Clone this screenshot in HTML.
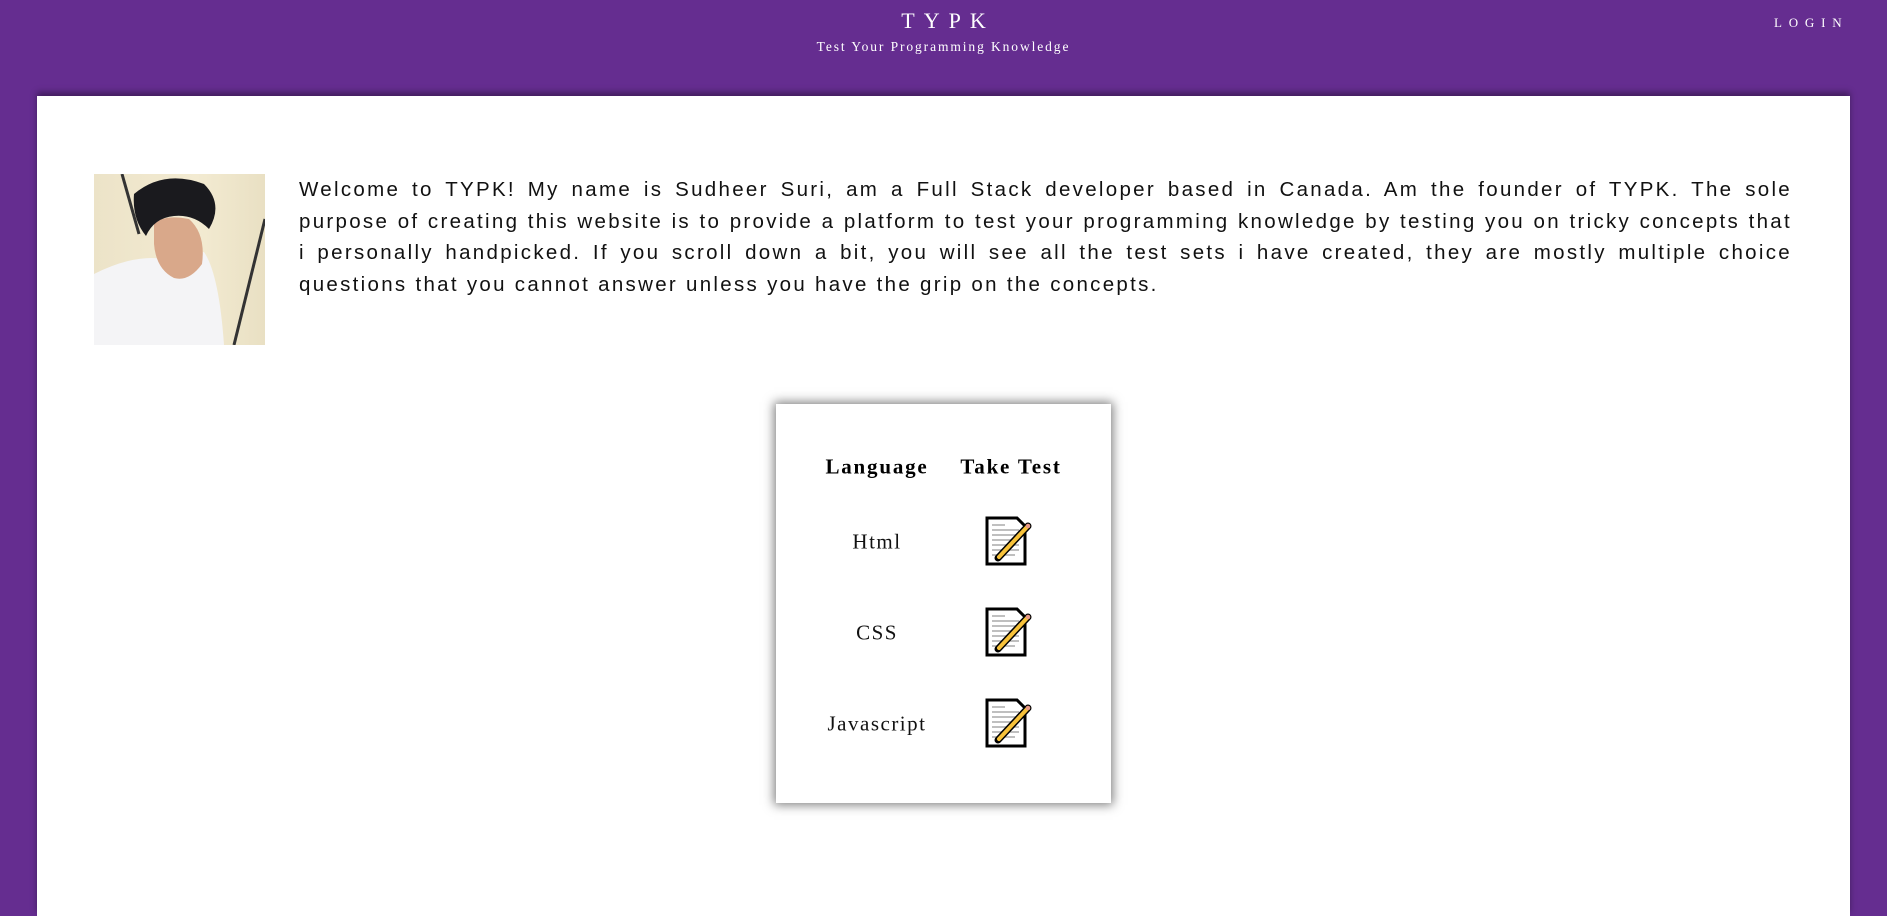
<!DOCTYPE html>
<html><head><meta charset="utf-8"><style>
*{margin:0;padding:0;box-sizing:border-box}
body{width:1887px;height:894px;overflow:hidden;background:#652d90;position:relative;font-family:"Liberation Serif",serif}
.h1{position:absolute;top:8px;left:0;width:1887px;text-align:center;color:#fff;font-size:22px;letter-spacing:9px;padding-left:9px}
.h2{position:absolute;top:39px;left:0;width:1887px;text-align:center;color:#fff;font-size:13.5px;letter-spacing:1.9px}
.login{position:absolute;top:15px;left:1774px;color:#fff;font-size:13px;letter-spacing:6.8px}
.card{position:absolute;left:37px;top:96px;width:1813px;height:820px;background:#fff;box-shadow:0 -4px 6px rgba(0,0,0,.35)}
.photo{position:absolute;left:94px;top:174px;width:171px;height:171px;overflow:hidden;background:linear-gradient(90deg,#ece3c8,#f3ebd2 60%,#e9e0c3)}
.txt{position:absolute;left:299px;top:174px;width:1493px;font-family:"Liberation Sans",sans-serif;font-size:20.5px;letter-spacing:2.3px;line-height:31.7px;text-align:justify;color:#111}
.tbl{position:absolute;left:776px;top:404px;width:335px;height:399px;background:#fff;box-shadow:0 0 10px 2px rgba(0,0,0,.5)}
.c{position:absolute;transform:translate(-50%,-50%);white-space:nowrap;font-size:21px;letter-spacing:1.5px;color:#111}
.b{font-weight:bold;color:#000;letter-spacing:1.8px}
.ic{position:absolute;width:50px;height:50px}
</style></head><body>
<div class="h1">TYPK</div>
<div class="h2">Test Your Programming Knowledge</div>
<div class="login">LOGIN</div>
<div class="card"></div>
<div class="photo"><svg width="171" height="171" viewBox="0 0 171 171">
<line x1="28" y1="0" x2="45" y2="60" stroke="#333" stroke-width="3"/>
<line x1="171" y1="45" x2="140" y2="171" stroke="#333" stroke-width="3"/>
<path d="M0 100 Q40 80 70 85 L110 78 Q125 100 130 171 L0 171Z" fill="#f4f4f6"/>
<path d="M60 50 Q70 40 95 45 Q112 60 108 90 Q95 108 80 104 Q62 95 60 70Z" fill="#d9a88a"/>
<path d="M40 20 Q70 -5 110 10 Q130 30 115 55 Q100 40 80 42 Q60 44 52 62 Q38 45 40 20Z" fill="#1a1a1e"/>
</svg></div>
<div class="txt">Welcome to TYPK! My name is Sudheer Suri, am a Full Stack developer based in Canada. Am the founder of TYPK. The sole purpose of creating this website is to provide a platform to test your programming knowledge by testing you on tricky concepts that i personally handpicked. If you scroll down a bit, you will see all the test sets i have created, they are mostly multiple choice questions that you cannot answer unless you have the grip on the concepts.</div>
<div class="tbl"></div>
<div class="c b" style="left:877px;top:467px">Language</div>
<div class="c b" style="left:1011px;top:467px">Take Test</div>
<div class="c" style="left:877px;top:542px">Html</div>
<div class="c" style="left:877px;top:633px">CSS</div>
<div class="c" style="left:877px;top:724px">Javascript</div>
<svg style="display:none"><defs><g id="icn">
<path d="M2 2 H32 L40 10 V48 H2Z" fill="#fff" stroke="#000" stroke-width="3"/>
<g stroke="#aaa" stroke-width="1.5"><line x1="7" y1="9" x2="20" y2="9"/><line x1="7" y1="14" x2="34" y2="14"/><line x1="7" y1="19" x2="34" y2="19"/><line x1="7" y1="24" x2="34" y2="24"/><line x1="7" y1="29" x2="34" y2="29"/><line x1="7" y1="34" x2="34" y2="34"/><line x1="7" y1="39" x2="30" y2="39"/></g>
<path d="M13 42 L43 10" stroke="#000" stroke-width="7" stroke-linecap="round"/>
<path d="M14 41 L43 10" stroke="#f7c23a" stroke-width="4" stroke-linecap="round"/>
<circle cx="43" cy="10" r="2.3" fill="#e89a8a"/>
</g></defs></svg>
<svg class="ic" style="left:985px;top:516px" viewBox="0 0 50 50"><use href="#icn"/></svg>
<svg class="ic" style="left:985px;top:607px" viewBox="0 0 50 50"><use href="#icn"/></svg>
<svg class="ic" style="left:985px;top:698px" viewBox="0 0 50 50"><use href="#icn"/></svg>
</body></html>
